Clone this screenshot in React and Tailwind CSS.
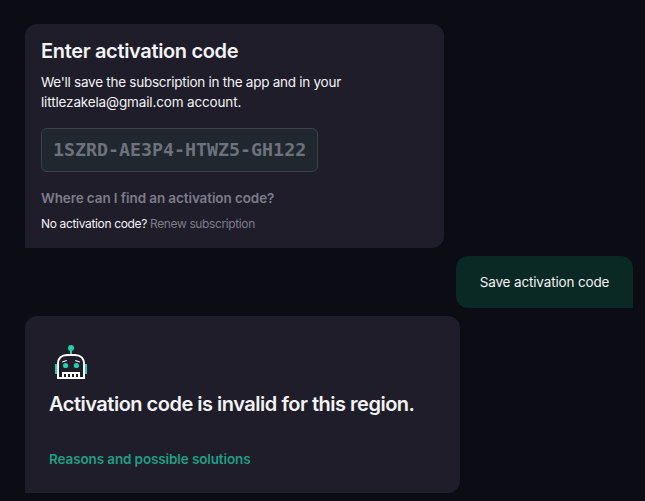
function RobotIcon() {
  return (
    <svg width="32" height="34" viewBox="0 0 32 34" fill="none" className="block">
      <path d="M0 19h2v10H0zM30 19h2v10h-2zM15 4h2v5h-2z" fill="#23d1ae" />
      <circle cx="16" cy="3" r="3" fill="#23d1ae" />
      <path d="M3 33V19C3 13 7 10 12 10H20C25 10 29 13 29 19V33Z" stroke="#fff" strokeWidth="2" />
      <path
        fillRule="evenodd"
        d="M7 27H25V33H7ZM9 29V32H11V29ZM13 29V32H15V29ZM17 29V32H19V29ZM21 29V32H23V29Z"
        fill="#fff"
      />
      <circle cx="10.6" cy="20.5" r="2.6" fill="#23d1ae" />
      <circle cx="21.4" cy="20.5" r="2.6" fill="#23d1ae" />
      <path d="M7.2 17L11.8 15.5M24.8 17L20.2 15.5" stroke="#fff" strokeWidth="1.1" />
    </svg>
  );
}

export default function App() {
  return (
    <main className="flex h-[501px] w-[645px] flex-col overflow-hidden bg-[#0c0c14] pt-6 pl-[25px] font-['Inter',sans-serif] text-[#f3f3f5]">
      <section className="flex h-[224px] w-[419px] flex-col items-start rounded-xl rounded-bl-none bg-[#1f1d29] px-4 pt-[15px] whitespace-nowrap">
        <h1 className="text-[20px] leading-6 font-semibold tracking-[-0.34px]">Enter activation code</h1>
        <p className="mt-[9px] text-[13.5px] leading-5 tracking-[-0.26px]">
          We'll save the subscription in the app and in your
          <br />
          <span className="tracking-[-0.15px]">littlezakela@gmail.com account.</span>
        </p>
        <div className="mt-4 flex h-11 w-[277px] items-center rounded-[6px] border border-[#3b444e] bg-[#20272e] pl-[11px] font-['DejaVu_Sans_Mono',monospace] text-[18.3px] font-bold text-[#6e727d]">
          1SZRD-AE3P4-HTWZ5-GH122
        </div>
        <a className="mt-4 text-[13.5px] leading-5 font-semibold tracking-[-0.1px] text-[#7d7c89]">
          Where can I find an activation code?
        </a>
        <p className="mt-2 text-[12px] leading-4 tracking-[-0.34px]">
          No activation code? <a className="tracking-[-0.38px] text-[#7d7c89]">Renew subscription</a>
        </p>
      </section>

      <button className="mt-2 mr-3 h-[52px] w-[177px] shrink-0 self-end rounded-xl rounded-br-none bg-[#0b2924] text-[13.5px] tracking-[-0.15px] whitespace-nowrap">
        Save activation code
      </button>

      <section className="mt-2 flex h-[177px] w-[435px] shrink-0 flex-col items-start rounded-xl rounded-bl-none bg-[#1f1d29] px-6 pt-[29px] whitespace-nowrap">
        <div className="ml-[6px]">
          <RobotIcon />
        </div>
        <h2 className="mt-[13px] text-[20px] leading-6 font-semibold tracking-[-0.49px]">
          Activation code is invalid for this region.
        </h2>
        <a className="mt-[33px] text-[13.5px] leading-5 font-semibold tracking-[-0.12px] text-[#1f9f84]">
          Reasons and possible solutions
        </a>
      </section>
    </main>
  );
}
